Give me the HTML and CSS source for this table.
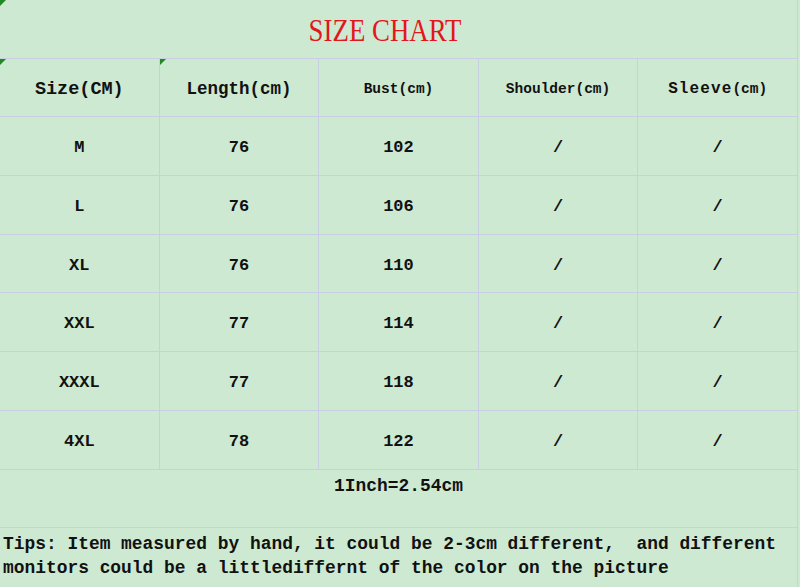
FILE: index.html
```html
<!DOCTYPE html>
<html>
<head>
<meta charset="utf-8">
<link rel="stylesheet" href="styles.css">
</head>
<body>
<div class="chart">
  <div class="cell title mark"><span class="title-text">SIZE CHART</span></div>

  <div class="cell head head-size mark">Size(CM)</div>
  <div class="cell head head-len mark">Length(cm)</div>
  <div class="cell head head-small">Bust(cm)</div>
  <div class="cell head head-small">Shoulder(cm)</div>
  <div class="cell head"><span class="sleeve">Sleeve</span><span class="head-small">(cm)</span></div>

  <div class="cell">M</div><div class="cell">76</div><div class="cell">102</div><div class="cell">/</div><div class="cell">/</div>
  <div class="cell">L</div><div class="cell">76</div><div class="cell">106</div><div class="cell">/</div><div class="cell">/</div>
  <div class="cell">XL</div><div class="cell">76</div><div class="cell">110</div><div class="cell">/</div><div class="cell">/</div>
  <div class="cell">XXL</div><div class="cell">77</div><div class="cell">114</div><div class="cell">/</div><div class="cell">/</div>
  <div class="cell">XXXL</div><div class="cell">77</div><div class="cell">118</div><div class="cell">/</div><div class="cell">/</div>
  <div class="cell">4XL</div><div class="cell">78</div><div class="cell">122</div><div class="cell">/</div><div class="cell">/</div>

  <div class="cell note">1Inch=2.54cm</div>
  <div class="cell tips">Tips: Item measured by hand, it could be 2-3cm different,&nbsp; and different monitors could be a littlediffernt of the color on the picture</div>
</div>
</body>
</html>
```

FILE: styles.css
```css
html, body {
  margin: 0;
  padding: 0;
  background: #cde9d1;
}

body {
  width: 800px;
  height: 587px;
  overflow: hidden;
  font-family: "Liberation Mono", "DejaVu Sans Mono", monospace;
  color: #111;
}

.chart {
  display: grid;
  grid-template-columns: repeat(5, 159.6px);
  grid-template-rows: repeat(10, 58.7px);
  width: 799px;
}

.cell {
  position: relative;
  display: flex;
  align-items: center;
  justify-content: center;
  padding-top: 3px;
  border-right: 1px solid #c9cfe2;
  border-bottom: 1px solid #c9cfe2;
  font-weight: bold;
  font-size: 17px;
  box-sizing: border-box;
}

.mark::before {
  content: "";
  position: absolute;
  left: 0;
  top: 0;
  width: 0;
  height: 0;
  border-top: 6px solid #1d8a22;
  border-right: 6px solid transparent;
}

.title {
  grid-column: 1 / 6;
  padding-right: 26px;
  padding-top: 4px;
}

.title-text {
  display: inline-block;
  font-family: "Liberation Serif", serif;
  font-weight: normal;
  font-size: 32px;
  color: #e3161c;
  transform: scaleX(0.84);
}

.head {
  padding-top: 3px;
}

.head-size {
  font-size: 18.5px;
}

.head-len {
  font-size: 17.5px;
}

.head-small {
  font-size: 14.5px;
}

.sleeve {
  font-size: 16px;
  letter-spacing: 1.1px;
}

.note {
  grid-column: 1 / 6;
  align-items: flex-start;
  padding-top: 6px;
  font-size: 17.9px;
}

.tips {
  grid-column: 1 / 6;
  display: block;
  text-align: left;
  padding: 4px 0 0 3px;
  font-size: 17.9px;
  line-height: 24px;
  border-bottom: none;
}
```
